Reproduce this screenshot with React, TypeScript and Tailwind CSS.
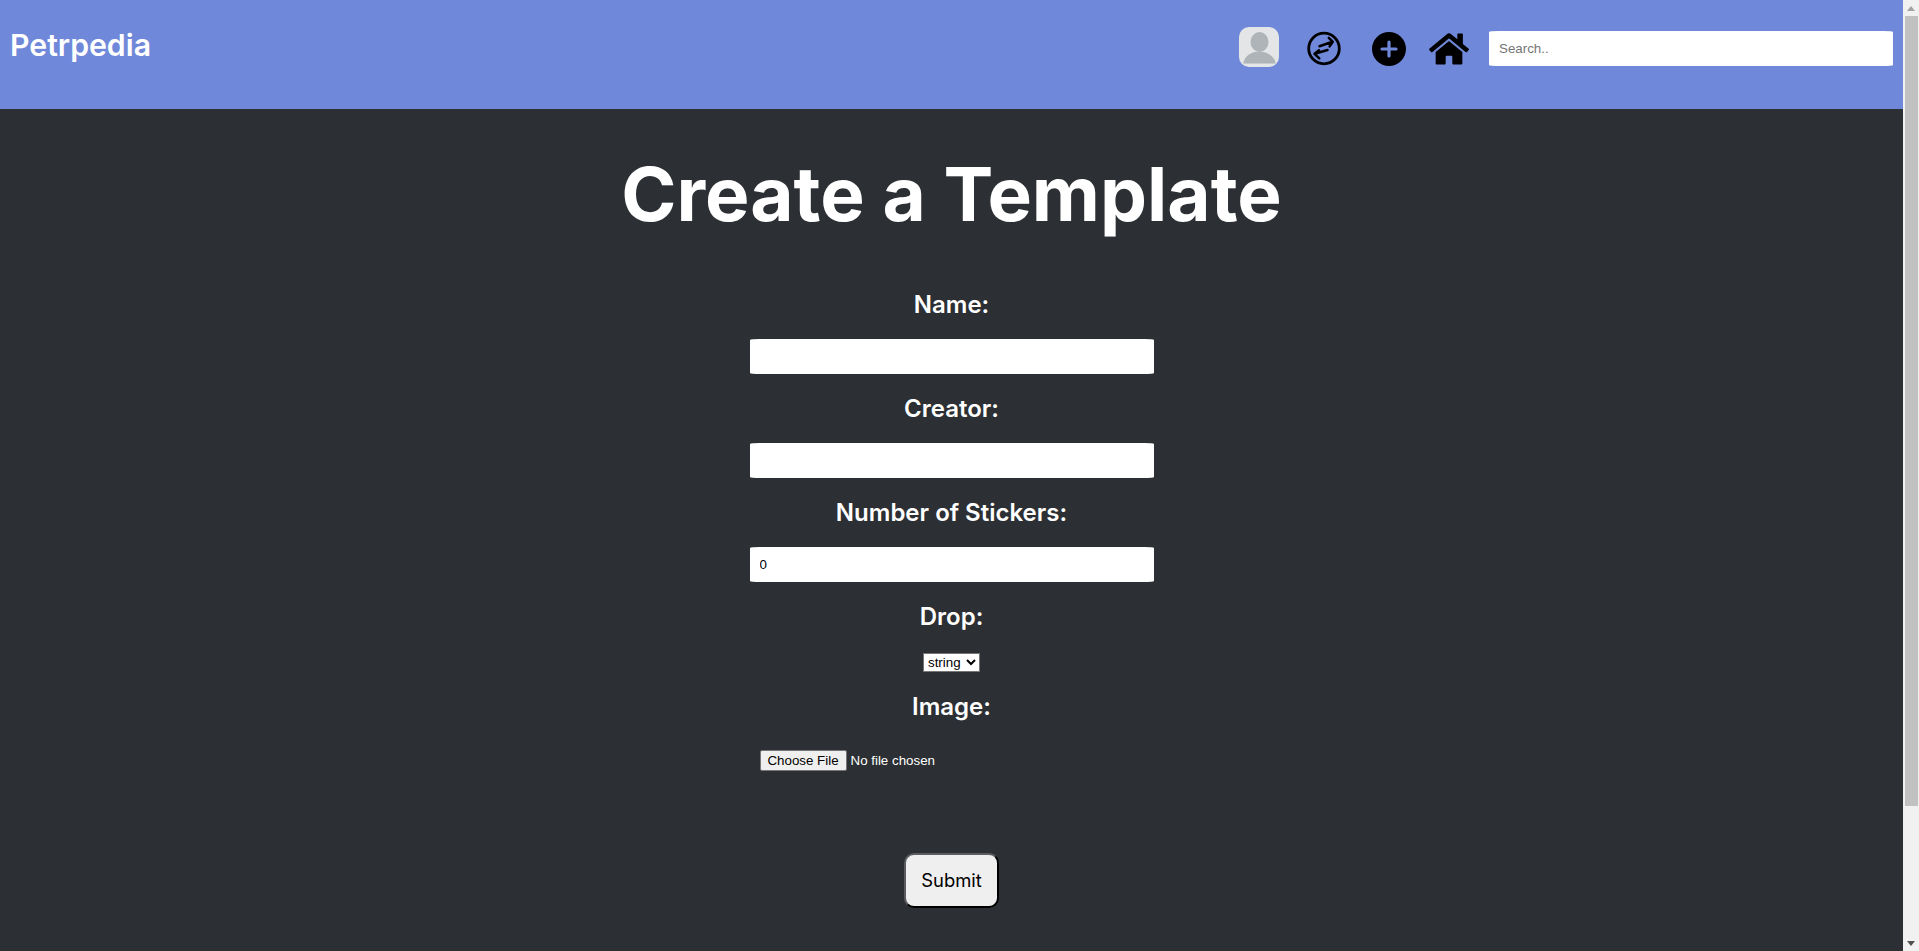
import React from "react";
import { FaHome } from "react-icons/fa";

const arial = "font-['Liberation_Sans',Arial,sans-serif]";
const labelCls = "block text-center text-2xl leading-[29px] font-semibold text-white";
const inputCls = `block w-[404px] h-[35px] bg-white rounded-[10px_/_1px] px-[10px] text-[13.33px] text-black outline-none ${arial}`;

function Avatar() {
  return (
    <svg width="40" height="40" viewBox="0 0 40 40" className="shrink-0 mb-[3px]">
      <rect width="40" height="40" rx="10" fill="#e3e5e6" />
      <ellipse cx="20.500" cy="15" rx="9" ry="10" fill="#aeb4b7" />
      <path d="M4.300 36.500c1.200-8 8.500-12 15.700-12s15.500 4 16.700 12z" fill="#aeb4b7" />
    </svg>
  );
}

function SwapCircle() {
  return (
    <svg width="34" height="35" viewBox="0 0 34 35" fill="none" stroke="#000" strokeLinecap="round" strokeLinejoin="round" className="shrink-0">
      <circle cx="17" cy="17.500" r="15.300" strokeWidth="2.800" />
      <g strokeWidth="2.500">
        <path d="M12.500 15.200l13-4.400M21.800 6.800l4 4-3.200 4.600" />
        <path d="M20.500 19l-12.800 3.800M12 19.300l-4.500 3.500 4.800 4.500" />
      </g>
    </svg>
  );
}

function PlusCircle() {
  return (
    <svg width="34" height="36" viewBox="0 0 34 36" className="shrink-0">
      <circle cx="17" cy="18" r="17" fill="#000" />
      <path d="M17 11v14M10 18h14" stroke="#7088d9" strokeWidth="3.200" strokeLinecap="round" />
    </svg>
  );
}

function Scrollbar() {
  return (
    <div className="w-4 shrink-0 h-[951px] bg-[#f1f1f1] flex flex-col items-center">
      <div className="h-4 w-full flex items-center justify-center">
        <svg width="8" height="5" viewBox="0 0 8 5"><path d="M4 0l4 5H0z" fill="#a3a3a3" /></svg>
      </div>
      <div className="w-[13px] ml-px h-[790px] bg-[#c1c1c1]" />
      <div className="flex-1" />
      <div className="h-4 w-full flex items-center justify-center">
        <svg width="8" height="5" viewBox="0 0 8 5"><path d="M0 0h8L4 5z" fill="#505050" /></svg>
      </div>
    </div>
  );
}

export default function App() {
  return (
    <div className="flex h-[951px] overflow-hidden bg-[#2c2f33] font-['Inter',sans-serif]">
      <div className="flex-1 min-w-0">
        <header className="h-[109px] bg-[#7088d9] flex items-start pl-[10px] pr-[10px]">
          <div className="mt-[27px] text-[30.24px] leading-[37px] font-semibold text-white">Petrpedia</div>
          <div className="ml-auto flex items-center h-[97px]">
            <Avatar />
            <div className="ml-[28px]"><SwapCircle /></div>
            <div className="ml-[31px]"><PlusCircle /></div>
            <FaHome className="ml-[23px] text-black shrink-0" size={40} />
            <input
              placeholder="Search.."
              className={`${inputCls} ml-[20px] placeholder:text-[#757575]`}
            />
          </div>
        </header>
        <main className="flex flex-col items-center">
          <h1 className="mt-[42px] text-[74.67px] leading-[87px] font-bold text-white">Create a Template</h1>
          <label className={`${labelCls} mt-[52px]`}>Name:</label>
          <input className={`${inputCls} mt-5`} />
          <label className={`${labelCls} mt-5`}>Creator:</label>
          <input className={`${inputCls} mt-5`} />
          <label className={`${labelCls} mt-5`}>Number of Stickers:</label>
          <input className={`${inputCls} mt-5`} type="number" defaultValue={0} />
          <label className={`${labelCls} mt-5`}>Drop:</label>
          <select className={`mt-[22px] h-[19px] w-[57px] bg-white border border-[#767676] text-[13.33px] text-black ${arial}`}>
            <option>string</option>
          </select>
          <label className={`${labelCls} mt-5`}>Image:</label>
          <input
            type="file"
            className={`mt-[19px] block w-[404px] p-[10px] text-[13.33px] text-white ${arial} file:mr-1 file:h-[21px] file:w-[87px] file:bg-[#efefef] file:text-black file:border file:border-solid file:border-[#767676] file:rounded-[2px] file:text-[13.33px]`}
          />
          <button className="mt-[72px] w-[95px] h-[55px] pt-px rounded-[10px] bg-[#efefef] border-2 border-t-[#5a5c5f] border-l-[#5a5c5f] border-r-black border-b-black text-[18.4px] text-black">
            Submit
          </button>
        </main>
      </div>
      <Scrollbar />
    </div>
  );
}
